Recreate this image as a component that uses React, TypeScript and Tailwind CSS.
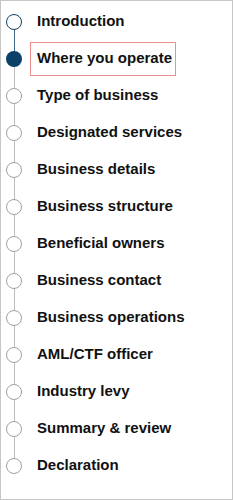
import React from "react";

const STEPS = [
  "Introduction",
  "Where you operate",
  "Type of business",
  "Designated services",
  "Business details",
  "Business structure",
  "Beneficial owners",
  "Business contact",
  "Business operations",
  "AML/CTF officer",
  "Industry levy",
  "Summary & review",
  "Declaration",
];

const CURRENT = 1;

export default function App() {
  return (
    <div
      className="h-[500px] w-[233px] border border-[#c6c6c6] bg-white"
      style={{ fontFamily: '"Liberation Sans", Arial, sans-serif' }}
    >
      <ul className="pt-[2px]">
        {STEPS.map((label, i) => {
          const done = i < CURRENT;
          const current = i === CURRENT;
          return (
            <li key={label} className="relative flex h-[37px] items-center">
              {/* connector above */}
              {i > 0 && (
                <span
                  className={
                    "absolute left-[13px] top-0 h-1/2 w-px " +
                    (i <= CURRENT ? "bg-[#3d6a8a]" : "bg-[#bdbdbd]")
                  }
                />
              )}
              {/* connector below */}
              {i < STEPS.length - 1 && (
                <span
                  className={
                    "absolute bottom-0 left-[13px] h-1/2 w-px " +
                    (i < CURRENT ? "bg-[#3d6a8a]" : "bg-[#bdbdbd]")
                  }
                />
              )}
              <span
                className={
                  "relative ml-[5px] h-[16px] w-[16px] shrink-0 rounded-full " +
                  (current
                    ? "bg-[#0b4168]"
                    : done
                      ? "border-[1.5px] border-[#0b4168] bg-white"
                      : "border border-[#a0a0a0] bg-white")
                }
              />
              <span
                className={
                  "ml-[8px] flex h-[34px] items-center border pl-[6px] pr-[3px] text-[15px] font-bold text-[#111] " +
                  (current ? "border-[#f08f8f]" : "border-transparent")
                }
              >
                {label}
              </span>
            </li>
          );
        })}
      </ul>
    </div>
  );
}
